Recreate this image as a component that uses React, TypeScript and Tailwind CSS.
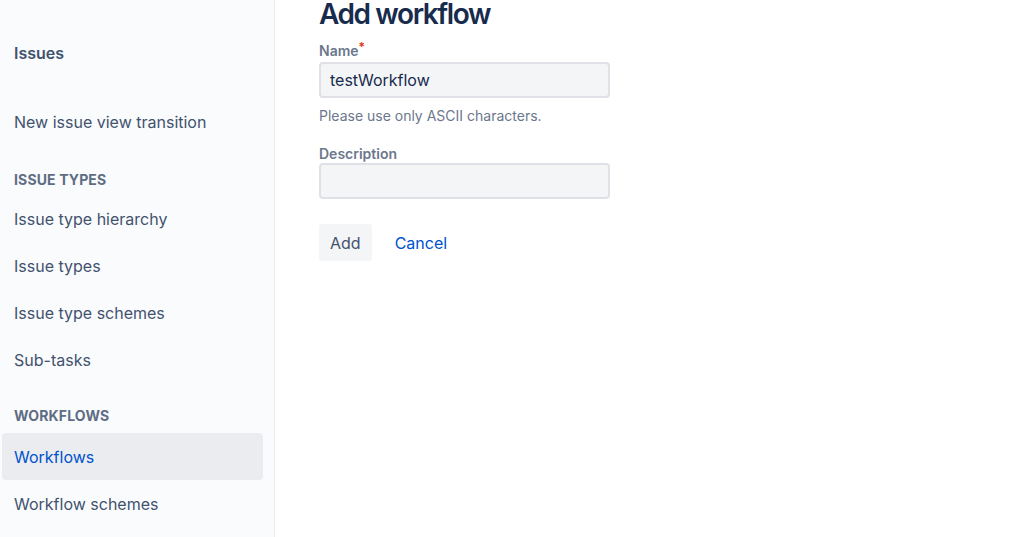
import React from 'react';

const navItem = 'flex items-center h-[47px] px-3 mx-0.5 rounded text-[16px]';
const sectionTitle = 'px-[14px] h-[24px] flex items-center text-[14px] font-bold tracking-[0.01em] text-[#5E6C84] uppercase';

export default function App() {
  return (
    <div
      className="flex h-[537px] w-[1024px] overflow-hidden bg-white"
      style={{ fontFamily: 'Inter, "Liberation Sans", Arial, sans-serif' }}
    >
      <aside className="w-[275px] shrink-0 bg-[#FAFBFC] border-r border-[#EBECF0] pt-[41px]">
        <div className="px-[14px] text-[16px] font-semibold text-[#42526E] leading-6">Issues</div>

        <div className="mt-[33px]">
          <div className={`${navItem} text-[#42526E]`}>New issue view transition</div>
        </div>

        <div className={`mt-[22px] ${sectionTitle}`}>Issue types</div>
        <div className="mt-[4px]">
          <div className={`${navItem} text-[#42526E]`}>Issue type hierarchy</div>
          <div className={`${navItem} text-[#42526E]`}>Issue types</div>
          <div className={`${navItem} text-[#42526E]`}>Issue type schemes</div>
          <div className={`${navItem} text-[#42526E]`}>Sub-tasks</div>
        </div>

        <div className={`mt-[20px] ${sectionTitle}`}>Workflows</div>
        <div className="mt-[6px]">
          <div className={`${navItem} h-[46px] w-[261px] bg-[#EBECF0] text-[#0052CC]`}>Workflows</div>
          <div className={`${navItem} text-[#42526E]`}>Workflow schemes</div>
        </div>
      </aside>

      <main className="flex-1 pl-[44px]">
        <h1 className="text-[28px] leading-[28px] font-semibold text-[#172B4D] tracking-[-0.05em]">
          Add workflow
        </h1>

        <form className="mt-[15px] w-[291px]">
          <label className="block text-[14px] leading-4 font-semibold text-[#6B778C]">
            Name<span className="relative -top-[5px] text-[#DE350B] text-[12px]">*</span>
          </label>
          <input
            defaultValue="testWorkflow"
            className="mt-[2px] block w-full h-[36px] px-[9px] bg-[#F4F5F7] border-2 border-[#DFE1E6] rounded-[4px] text-[16px] text-[#172B4D] outline-none"
          />
          <p className="mt-[10px] text-[14px] leading-4 text-[#6B778C]">Please use only ASCII characters.</p>

          <label className="mt-[22px] block text-[14px] leading-4 font-semibold text-[#6B778C]">Description</label>
          <input className="mt-[1px] block w-full h-[36px] px-[9px] bg-[#F4F5F7] border-2 border-[#DFE1E6] rounded-[4px] text-[16px] outline-none" />

          <div className="mt-[25px] flex items-center gap-[11px]">
            <button type="button" className="h-[37px] px-[11px] rounded-[3px] bg-[#F4F5F7] text-[16px] text-[#42526E]">
              Add
            </button>
            <button type="button" className="h-[37px] px-[12px] text-[16px] text-[#0052CC]">
              Cancel
            </button>
          </div>
        </form>
      </main>
    </div>
  );
}
